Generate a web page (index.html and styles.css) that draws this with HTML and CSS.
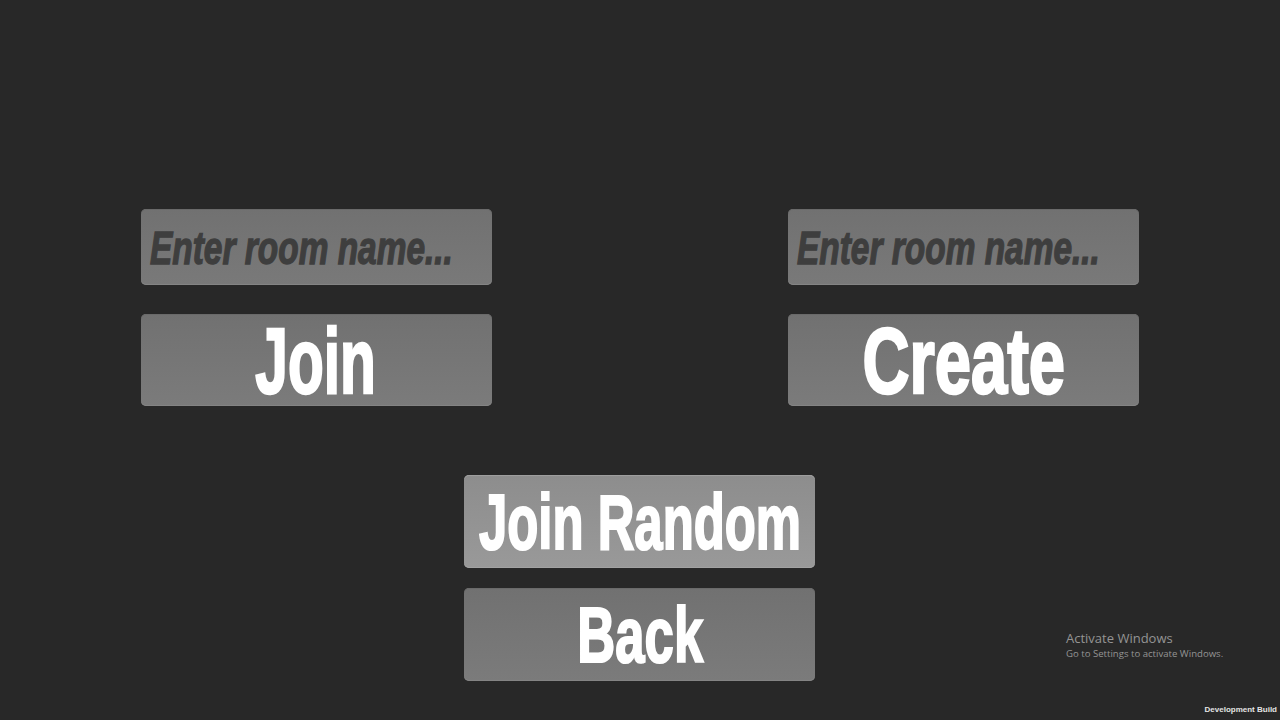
FILE: index.html
```html
<!DOCTYPE html>
<html lang="en">
<head>
<meta charset="utf-8">
<title>Rooms</title>
<link rel="stylesheet" href="styles.css">
</head>
<body>
<main class="screen">
  <section class="rooms">
    <div class="room">
      <div class="field"><span class="placeholder">Enter room name...</span></div>
      <div class="btn btn-tall"><span class="label label-large label-join">Join</span></div>
    </div>
    <div class="room">
      <div class="field"><span class="placeholder">Enter room name...</span></div>
      <div class="btn btn-tall"><span class="label label-large label-create">Create</span></div>
    </div>
  </section>
  <section class="actions">
    <div class="btn btn-light"><span class="label label-mid label-random">Join Random</span></div>
    <div class="btn"><span class="label label-mid label-back">Back</span></div>
  </section>
</main>
<div class="activate">
  <div class="activate-title">Activate Windows</div>
  <div class="activate-sub">Go to Settings to activate Windows.</div>
</div>
<div class="devbuild">Development Build</div>
</body>
</html>
```
FILE: styles.css
```css
html, body { margin: 0; padding: 0; }
body {
  width: 1280px;
  height: 720px;
  overflow: hidden;
  position: relative;
  background: #282828;
  font-family: "Liberation Sans", sans-serif;
}
.screen {
  display: flex;
  flex-direction: column;
  padding-top: 209px;
}
.rooms {
  display: flex;
  justify-content: space-between;
  padding: 0 141px;
}
.room {
  width: 351px;
  display: flex;
  flex-direction: column;
  gap: 29px;
}
.field, .btn {
  box-sizing: border-box;
  border-radius: 5px;
  background: linear-gradient(#717171, #7b7b7b);
  box-shadow: inset 0 1px 0 #6a6a6a, inset 0 -1px 0 #848484;
  display: flex;
  align-items: center;
}
.field {
  height: 76px;
  padding-left: 9px;
  background: linear-gradient(#717171, #797979);
}
.placeholder {
  color: #3e3e3e;
  font-size: 46px;
  font-weight: 700;
  font-style: italic;
  white-space: nowrap;
  transform-origin: left center;
  transform: translateY(1px) scaleX(0.727);
  -webkit-text-stroke: 1.4px #3e3e3e;
}
.btn {
  height: 93px;
  justify-content: center;
}
.btn-tall { height: 92px; }
.btn-light {
  background: linear-gradient(#8d8d8d, #999999);
  box-shadow: inset 0 1px 0 #9e9e9e, inset 0 -1px 0 #a2a2a2;
}
.label {
  color: #fff;
  font-weight: 700;
  white-space: nowrap;
}
.label-large {
  font-size: 93px;
  -webkit-text-stroke: 2.6px #fff;
}
.label-join { transform: translate(-1px, 1px) scaleX(0.63); }
.label-create { transform: translate(0, 1px) scaleX(0.7); }
.label-mid {
  font-size: 78px;
  -webkit-text-stroke: 2.2px #fff;
}
.label-random { transform: translateY(1px) scaleX(0.652); }
.label-back { transform: translate(1px, 1px) scaleX(0.675); }
.actions {
  width: 351px;
  margin: 69px auto 0 464px;
  display: flex;
  flex-direction: column;
  gap: 20px;
}
.activate {
  position: absolute;
  left: 1066px;
  top: 630px;
  font-family: "Open Sans", sans-serif;
  color: #949494;
}
.activate-title { font-size: 13px; line-height: 17px; }
.activate-sub { font-size: 9.6px; line-height: 14px; }
.devbuild {
  position: absolute;
  right: 3px;
  bottom: 4px;
  color: #e4e4e4;
  font-size: 8px;
  font-weight: 700;
  line-height: 12px;
}
```
